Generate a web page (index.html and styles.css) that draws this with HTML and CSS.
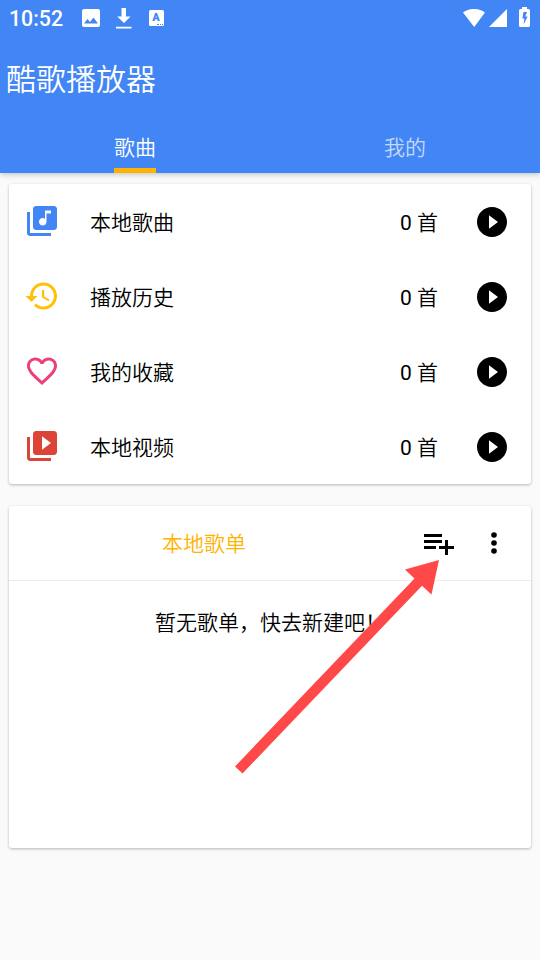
FILE: index.html
```html
<!DOCTYPE html>
<html lang="zh-CN">
<head>
<meta charset="utf-8">
<title>酷歌播放器</title>
<link rel="stylesheet" href="styles.css">
</head>
<body>
<svg class="defs" aria-hidden="true">
  <symbol id="play" viewBox="0 0 24 24"><path d="M12 2C6.48 2 2 6.48 2 12s4.48 10 10 10 10-4.48 10-10S17.52 2 12 2zm-2 14.5v-9l6 4.5-6 4.5z"/></symbol>
</svg>
<header class="appbar">
  <div class="status">
    <span class="clock">10:52</span>
    <svg class="s-image" viewBox="0 0 18 18"><path fill-rule="evenodd" d="M2 0h14a2 2 0 0 1 2 2v14a2 2 0 0 1-2 2H2a2 2 0 0 1-2-2V2a2 2 0 0 1 2-2zM5.500 10l-3.500 4.500h14L11.500 8.500 8 13z"/></svg>
    <svg class="s-download" viewBox="0 0 16 21"><path d="M5.500 0h4.500v8.500h4.500L8 15 1.200 8.500h4.300zM0 18.700h15.500v1.800H0z"/></svg>
    <span class="s-letter">A<i></i></span>
    <svg class="s-wifi" viewBox="0 0 22 18"><path d="M0 3.500C6.500-1.200 15.500-1.200 22 3.500L11.200 18z"/></svg>
    <svg class="s-signal" viewBox="0 0 18 18"><path d="M18 0v18H0z"/></svg>
    <svg class="s-battery" viewBox="0 0 11 20"><path fill-rule="evenodd" d="M3 0h5v2h1.500A1.500 1.500 0 0 1 11 3.500v15a1.500 1.500 0 0 1-1.500 1.500h-8A1.500 1.500 0 0 1 0 18.500v-15A1.500 1.500 0 0 1 1.500 2H3zM4.500 5L3.300 11.500h2L4.600 17.500 8.600 9.500H6.300L8 5z"/></svg>
  </div>
  <h1 class="title">酷歌播放器</h1>
  <nav class="tabs">
    <a class="tab active"><span>歌曲</span></a>
    <a class="tab"><span>我的</span></a>
  </nav>
</header>
<main class="content">
  <section class="card">
    <div class="row">
      <svg class="icon blue" viewBox="0 0 24 24"><path d="M20 2H8c-1.100 0-2 .900-2 2v12c0 1.100.900 2 2 2h12c1.100 0 2-.900 2-2V4c0-1.100-.900-2-2-2zm-2 5h-3v5.500c0 1.380-1.120 2.500-2.500 2.500S10 13.880 10 12.500s1.120-2.500 2.500-2.500c.570 0 1.080.190 1.500.510V5h4v2zM4 6H2v14c0 1.100.900 2 2 2h14v-2H4V6z"/></svg>
      <span class="name">本地歌曲</span><span class="count"><b>0</b> 首</span><svg class="play"><use href="#play"/></svg>
    </div>
    <div class="row">
      <svg class="icon amber" viewBox="0 0 24 24"><path d="M13 3c-4.970 0-9 4.030-9 9H1l3.890 3.890.070.140L9 12H6c0-3.870 3.130-7 7-7s7 3.130 7 7-3.130 7-7 7c-1.930 0-3.680-.790-4.940-2.060l-1.420 1.420C8.270 19.990 10.510 21 13 21c4.970 0 9-4.030 9-9s-4.030-9-9-9zm-1 5v5l4.280 2.540.720-1.210-3.500-2.080V8H12z"/></svg>
      <span class="name">播放历史</span><span class="count"><b>0</b> 首</span><svg class="play"><use href="#play"/></svg>
    </div>
    <div class="row">
      <svg class="icon pink" viewBox="0 0 24 24"><path d="M16.500 3c-1.740 0-3.410.810-4.500 2.090C10.910 3.810 9.240 3 7.500 3 4.420 3 2 5.420 2 8.500c0 3.780 3.400 6.860 8.550 11.540L12 21.350l1.450-1.320C18.600 15.360 22 12.280 22 8.500 22 5.420 19.580 3 16.500 3zm-4.400 15.550l-.100.100-.100-.100C7.140 14.240 4 11.390 4 8.500 4 6.500 5.500 5 7.500 5c1.540 0 3.040.990 3.570 2.360h1.870C13.460 5.990 14.960 5 16.500 5c2 0 3.500 1.500 3.500 3.500 0 2.890-3.140 5.740-7.900 10.050z"/></svg>
      <span class="name">我的收藏</span><span class="count"><b>0</b> 首</span><svg class="play"><use href="#play"/></svg>
    </div>
    <div class="row">
      <svg class="icon red" viewBox="0 0 24 24"><path d="M4 6H2v14c0 1.100.900 2 2 2h14v-2H4V6zm16-4H8c-1.100 0-2 .900-2 2v12c0 1.100.900 2 2 2h12c1.100 0 2-.900 2-2V4c0-1.100-.900-2-2-2zm-8 12.500v-9l6 4.500-6 4.500z"/></svg>
      <span class="name">本地视频</span><span class="count"><b>0</b> 首</span><svg class="play"><use href="#play"/></svg>
    </div>
  </section>
  <section class="card playlists">
    <div class="head">
      <h2 class="head-title">本地歌单</h2>
      <svg class="add" viewBox="0 0 24 24"><path d="M14 10H2v2h12v-2zm0-4H2v2h12V6zm4 8v-4h-2v4h-4v2h4v4h2v-4h4v-2h-4zM2 16h8v-2H2v2z"/></svg>
      <svg class="more" viewBox="0 0 24 24"><circle cx="12" cy="6" r="2.100"/><circle cx="12" cy="12" r="2.100"/><circle cx="12" cy="18" r="2.100"/></svg>
    </div>
    <p class="empty">暂无歌单，快去新建吧！</p>
  </section>
</main>
<svg class="pointer" viewBox="0 0 204 214"><path d="M204 0L196.500 34.500 187 25.700 7.500 213.500 0 206.500 179.500 18.600 170 9.500z"/></svg>
</body>
</html>
```
FILE: styles.css
```css
* { box-sizing: border-box; }
body {
  margin: 0;
  width: 540px;
  height: 960px;
  overflow: hidden;
  position: relative;
  background: #fafafa;
  color: #000;
  font: 350 21px/30px Roboto, "Noto Sans CJK SC", sans-serif;
}
h1, h2, p { margin: 0; font-weight: inherit; }
svg { display: block; flex: none; fill: currentColor; }
.defs { display: none; }

.appbar {
  height: 173px;
  background: #4285f4;
  color: #fff;
  box-shadow: 0 1px 6px rgba(0, 0, 0, .25);
  display: flex;
  flex-direction: column;
}
.status { height: 36px; display: flex; align-items: center; padding: 0 10px 0 9px; }
.clock { width: 72.5px; font-weight: 500; font-size: 21.3px; padding-top: 2px; }
.s-image { width: 18px; height: 18px; }
.s-download { width: 16px; height: 21px; margin-left: 16px; }
.s-letter {
  width: 15px;
  height: 16px;
  margin-left: 17px;
  border-radius: 1.5px;
  background: #fff;
  color: #4285f4;
  font-size: 11px;
  font-weight: 900;
  line-height: 15px;
  text-align: center;
  position: relative;
}
.s-letter i {
  position: absolute;
  right: 1px;
  bottom: 1px;
  width: 6px;
  border-bottom: 1px dotted #4285f4;
}
.s-wifi { width: 22px; height: 18px; margin-left: auto; margin-right: 4px; }
.s-signal { width: 18px; height: 18px; margin-right: 12px; }
.s-battery { width: 11px; height: 20px; margin-top: -2px; }
.title { height: 87px; padding: 22px 0 0 6px; font-size: 30px; line-height: 44px; }
.tabs { flex: 1; display: flex; }
.tab { flex: 1; display: flex; justify-content: center; color: rgba(255, 255, 255, .7); }
.tab span { padding-top: 10px; height: 50px; border-bottom: 5px solid transparent; }
.active { color: #fff; }
.tab.active span { border-color: #ffb300; }

.content { padding: 11px 9px 0; }
.card {
  background: #fff;
  border-radius: 3px;
  box-shadow: 0 1px 3px rgba(0, 0, 0, .28);
}
.row { height: 75px; display: flex; align-items: center; padding: 0 21px 0 15px; }
.icon { width: 36px; height: 36px; margin-top: -1px; }
.blue { color: #4285f4; }
.amber { color: #ffc107; }
.pink { color: #ec407a; }
.red { color: #db4437; }
.name { flex: 1; margin-left: 30px; padding-top: 2px; }
.count { margin-right: 36px; padding-top: 2px; }
.count b { font-weight: 400; }
.play { width: 36px; height: 36px; margin-top: 1px; }

.playlists { margin-top: 22px; height: 342px; }
.head { height: 75px; display: flex; align-items: center; border-bottom: 1px solid #ececec; }
.head-title { width: 390px; margin-right: 22px; text-align: center; font-size: 21px; color: #ffb300; padding-top: 1px; }
.add { width: 36px; height: 36px; }
.more { width: 32px; height: 32px; margin-left: 21px; }
.empty { padding: 27px 0 0 1px; text-align: center; }

.pointer { position: absolute; left: 235px; top: 560px; width: 204px; height: 214px; fill: #ff4848; }
```
